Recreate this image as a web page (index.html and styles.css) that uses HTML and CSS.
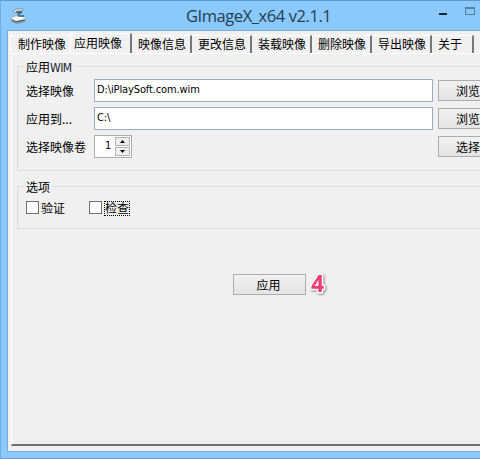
FILE: index.html
```html
<!DOCTYPE html>
<html lang="zh-CN">
<head>
<meta charset="utf-8">
<title>GImageX_x64 v2.1.1</title>
<link rel="stylesheet" href="styles.css">
</head>
<body>
<div class="window">
  <header class="titlebar">
    <svg class="app-icon" width="18" height="18" viewBox="0 0 18 18">
      <path d="M1 11l4-2h7l4 2-2 3-9 1z" fill="#edf0ee" stroke="#9aa9b0" stroke-width=".6"/>
      <path d="M1 12l5 2 9-2v3l-8 2-5-2z" fill="#8998a0"/>
      <path d="M2 13l4 2 9-2" fill="none" stroke="#465d6b"/>
      <path d="M3 4l4-2 6 0-1 2-5 0-2 2z" fill="#f0f0e9" stroke="#6d8088" stroke-width=".7"/>
      <path d="M6 5h6L8 7l1 2h5" fill="none" stroke="#466270" stroke-width="1.4"/>
      <path d="M4 11l5-1 4 1-6 2z" fill="#fff"/>
    </svg>
    <h1 class="title">GImageX_x64 v2.1.1</h1>
    <div class="controls"><i class="minimize"></i><i class="maximize"></i></div>
  </header>
  <main class="client">
    <nav class="tabs">
      <span class="tab first">制作映像</span><span class="tab active">应用映像</span><span class="tab">映像信息</span><span class="tab">更改信息</span><span class="tab">装载映像</span><span class="tab">删除映像</span><span class="tab">导出映像</span><span class="tab about">关于</span>
    </nav>
    <div class="panel">
      <section class="group source">
        <h2 class="legend">应用<span class="latin">WIM</span></h2>
        <div class="row"><label>选择映像</label><div class="field">D:\iPlaySoft.com.wim</div><button class="browse">浏览</button></div>
        <div class="row"><label>应用到...</label><div class="field">C:\</div><button class="browse">浏览</button></div>
        <div class="row"><label>选择映像卷</label><div class="spinner"><span>1</span><div class="steps"><b><svg width="5" height="3"><path d="M0 3L2.5 0 5 3z"/></svg></b><b><svg width="5" height="3"><path d="M0 0h5L2.5 3z"/></svg></b></div></div><button class="browse select">选择</button></div>
      </section>
      <section class="group options">
        <h2 class="legend">选项</h2>
        <div class="checks"><label class="check"><i></i><span>验证</span></label><label class="check"><i></i><span class="focused">检查</span></label></div>
      </section>
      <div class="actions"><button class="apply">应用</button><svg class="step" width="22" height="26"><text x="3" y="20">4</text></svg></div>
    </div>
  </main>
</div>
</body>
</html>
```
FILE: styles.css
```css
* { box-sizing: border-box; }
body {
  margin: 0;
  width: 480px;
  height: 459px;
  overflow: hidden;
  font: 12px/16px "Noto Sans CJK SC", sans-serif;
  color: #000;
}
.window {
  width: 480px;
  height: 459px;
  overflow: hidden;
  background: #8bc8fb;
  border-top: 1px solid #5d98c8;
  border-left: 1px solid #70aede;
  border-bottom: 1px solid #6d9dc9;
}
.titlebar { height: 29px; display: flex; }
.app-icon { margin: 6px 0 0 9px; flex: none; }
.title {
  margin: 3px 0 0 158px;
  width: 147px;
  flex: none;
  font: 16.5px/23px "Open Sans", sans-serif;
  letter-spacing: -.43px;
  white-space: nowrap;
  color: #233d53;
}
.controls { display: flex; margin-left: 106px; }
.minimize { width: 8px; height: 2px; margin-top: 12px; background: #17293a; }
.maximize { width: 10px; height: 8px; margin: 6px 0 0 18px; border: 1px solid #557e9f; border-top-width: 2px; }
.client {
  height: 422px;
  margin-left: 6px;
  padding: 3px 0 0 3px;
  background: #f0f0f0;
  border: 1px solid #78afd9;
  border-right: 0;
}
.tabs { display: flex; height: 19px; align-items: flex-end; margin-left: -1px; }
.tab {
  width: 60px;
  height: 18px;
  padding-left: 6px;
  border-top: 1px solid #fff;
  border-right: 2px solid #777;
  white-space: nowrap;
}
.tab.first { width: 60px; padding-left: 7px; border-left: 1px solid #fff; border-right: 0; }
.tab.active { width: 62px; height: 20px; padding-left: 3px; line-height: 17px; border-left: 1px solid #fff; }
.tab.about { width: 42px; }
.panel {
  height: 393px;
  padding: 6px 0 0 5px;
  border-left: 1px solid #fff;
  border-top: 1px solid #fff;
  border-bottom: 2px solid #707070;
}
.group {
  margin: 6px 0 0;
  border: 1px solid #dcdcdc;
  border-right: 0;
}
.source { height: 105px; }
.options { height: 43px; margin-top: 15px; }
.legend {
  width: max-content;
  height: 16px;
  margin: -8px 0 0 6px;
  padding: 0 2px;
  background: #f0f0f0;
  font-size: 12px;
  font-weight: 400;
  line-height: 15px;
}
.latin { font: 12px/15px "DejaVu Sans Condensed", sans-serif; letter-spacing: -.5px; color: #223; }
.row { display: flex; height: 28px; padding-left: 8px; }
.source .legend { margin-bottom: 4px; }
.row label { width: 68px; flex: none; line-height: 23px; white-space: nowrap; }
.field {
  width: 339px;
  height: 23px;
  flex: none;
  padding-left: 2px;
  background: #fff;
  border: 1px solid #9aabc5;
  font: 11px/19px "DejaVu Sans Condensed", sans-serif;
  letter-spacing: -.12px;
}
button {
  padding: 0;
  font: inherit;
  color: #000;
  background: linear-gradient(#f1f1f1, #e4e4e4);
  border: 1px solid #acacac;
  border-radius: 0;
}
.browse { width: 75px; height: 21px; margin: 1px 0 0 5px; padding-left: 17px; flex: none; text-align: left; line-height: 19px; }
.spinner { display: flex; width: 38px; height: 23px; background: #fff; border: 1px solid #abadb3; flex: none; }
.spinner span { width: 20px; padding-left: 10px; font: 11px/19px "DejaVu Sans Condensed", sans-serif; }
.steps { padding-top: 1px; }
.steps b { display: flex; width: 15px; height: 9px; align-items: center; justify-content: center; border: 1px solid #b5b5b5; background: #eee; }
.steps b + b { margin-top: 1px; }
.browse.select { margin-left: 306px; }
.checks { display: flex; padding: 6px 0 0 8px; }
.check { display: flex; width: 63px; height: 15px; }
.check i { width: 13px; height: 13px; background: #fff; border: 1px solid #707070; }
.check span { height: 15px; width: 26px; margin-left: 2px; line-height: 14px; }
.check .focused { border: 1px dotted #000; padding-left: 0; line-height: 12px; }
.actions { display: flex; margin: 45px 0 0 216px; }
.apply { width: 73px; height: 21px; line-height: 19px; padding-right: 2px; }
.step { margin: -2px 0 0 2px; overflow: visible; }
.step text {
  font: 700 23px "Noto Sans", sans-serif;
  fill: #ee3c78;
  stroke: #fff;
  stroke-width: 3px;
  paint-order: stroke;
  stroke-linejoin: round;
  filter: drop-shadow(1px 1px 1px #888);
}
```
